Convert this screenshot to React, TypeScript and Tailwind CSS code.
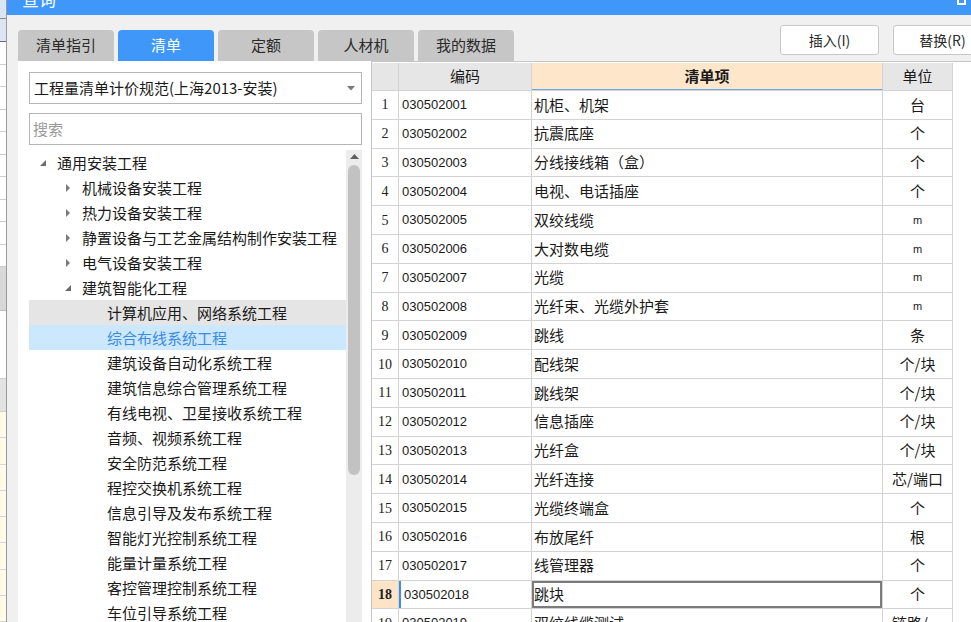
import React from "react";

const CJK = '"Noto Sans CJK SC", "Noto Sans", sans-serif';

type TreeRow = { level: number; arrow: "open" | "closed" | "none"; text: string; state?: "hover" | "selected" };

const tree: TreeRow[] = [
  { level: 0, arrow: "open", text: "通用安装工程" },
  { level: 1, arrow: "closed", text: "机械设备安装工程" },
  { level: 1, arrow: "closed", text: "热力设备安装工程" },
  { level: 1, arrow: "closed", text: "静置设备与工艺金属结构制作安装工程" },
  { level: 1, arrow: "closed", text: "电气设备安装工程" },
  { level: 1, arrow: "open", text: "建筑智能化工程" },
  { level: 2, arrow: "none", text: "计算机应用、网络系统工程", state: "hover" },
  { level: 2, arrow: "none", text: "综合布线系统工程", state: "selected" },
  { level: 2, arrow: "none", text: "建筑设备自动化系统工程" },
  { level: 2, arrow: "none", text: "建筑信息综合管理系统工程" },
  { level: 2, arrow: "none", text: "有线电视、卫星接收系统工程" },
  { level: 2, arrow: "none", text: "音频、视频系统工程" },
  { level: 2, arrow: "none", text: "安全防范系统工程" },
  { level: 2, arrow: "none", text: "程控交换机系统工程" },
  { level: 2, arrow: "none", text: "信息引导及发布系统工程" },
  { level: 2, arrow: "none", text: "智能灯光控制系统工程" },
  { level: 2, arrow: "none", text: "能量计量系统工程" },
  { level: 2, arrow: "none", text: "客控管理控制系统工程" },
  { level: 2, arrow: "none", text: "车位引导系统工程" },
];

const rows: { code: string; name: string; unit: string }[] = [
  { code: "030502001", name: "机柜、机架", unit: "台" },
  { code: "030502002", name: "抗震底座", unit: "个" },
  { code: "030502003", name: "分线接线箱（盒）", unit: "个" },
  { code: "030502004", name: "电视、电话插座", unit: "个" },
  { code: "030502005", name: "双绞线缆", unit: "m" },
  { code: "030502006", name: "大对数电缆", unit: "m" },
  { code: "030502007", name: "光缆", unit: "m" },
  { code: "030502008", name: "光纤束、光缆外护套", unit: "m" },
  { code: "030502009", name: "跳线", unit: "条" },
  { code: "030502010", name: "配线架", unit: "个/块" },
  { code: "030502011", name: "跳线架", unit: "个/块" },
  { code: "030502012", name: "信息插座", unit: "个/块" },
  { code: "030502013", name: "光纤盒", unit: "个/块" },
  { code: "030502014", name: "光纤连接", unit: "芯/端口" },
  { code: "030502015", name: "光缆终端盒", unit: "个" },
  { code: "030502016", name: "布放尾纤", unit: "根" },
  { code: "030502017", name: "线管理器", unit: "个" },
  { code: "030502018", name: "跳块", unit: "个" },
  { code: "030502019", name: "双绞线缆测试", unit: "链路/…" },
];

function Arrow({ kind }: { kind: "open" | "closed" | "none" }) {
  if (kind === "open")
    return (
      <svg width="8" height="8" viewBox="0 0 8 8">
        <polygon points="7,1 7,7 1,7" fill="#6b6b6b" />
      </svg>
    );
  if (kind === "closed")
    return (
      <svg width="6" height="10" viewBox="0 0 6 10">
        <polygon points="1,1 5,5 1,9" fill="#7a7a7a" />
      </svg>
    );
  return null;
}

function LeftStrip() {
  return (
    <div className="w-[6px] shrink-0 flex flex-col bg-white">
      <div className="h-[20px] bg-[#dbe5f3] border-b border-[#8a8a8a]" />
      <div className="h-[25px] bg-[#dbe5f3] border-b border-[#6a6a6a]" />
      {Array.from({ length: 10 }).map((_, i) => (
        <div key={i} className="h-[24px] border-b border-[#cfcfcf]" />
      ))}
      <div className="h-[47px] bg-[#d8d8d8] border-b border-[#bdbdbd]" />
      <div className="h-[72px] border-b border-[#cfcfcf]" />
      <div className="h-[36px] bg-[#e2e2e2] border-b border-[#cfcfcf]" />
      {Array.from({ length: 8 }).map((_, i) => (
        <div key={i} className="h-[28px] bg-[#fffbe8] border-b border-[#d6d6d6]" />
      ))}
    </div>
  );
}

function TreePanel() {
  return (
    <div className="w-[353px] shrink-0 bg-white pl-[11px] pr-[8px] pt-[11px] flex flex-col" style={{ fontFamily: CJK }}>
      <div className="h-[32px] w-[333px] border border-[#b5b5b5] bg-white flex items-center pl-[4px] pr-[6px]">
        <span className="flex-1 text-[15px] leading-[20px] text-[#1a1a1a] whitespace-nowrap">工程量清单计价规范(上海2013-安装)</span>
        <svg width="8" height="5" viewBox="0 0 8 5">
          <polygon points="0,0 8,0 4,4.5" fill="#7a7a7a" />
        </svg>
      </div>
      <div className="mt-[9px] h-[32px] w-[333px] border border-[#b5b5b5] bg-white flex items-center pl-[3px]">
        <span className="text-[15px] leading-[20px] text-[#9a9a9a]">搜索</span>
      </div>
      <div className="mt-[5px] flex flex-1 min-h-0 w-[333px]">
        <div className="flex-1 flex flex-col overflow-hidden">
          {tree.map((r, i) => (
            <div
              key={i}
              className={
                "h-[25px] shrink-0 flex items-center whitespace-nowrap " +
                (r.state === "hover" ? "bg-[#e5e5e5] " : r.state === "selected" ? "bg-[#cce8ff] " : "")
              }
              style={{ paddingLeft: 4 + r.level * 25 }}
            >
              <div className="w-[20px] h-[25px] flex items-center justify-center">
                <Arrow kind={r.arrow} />
              </div>
              <span
                className={
                  "ml-[4px] text-[15px] leading-[25px] " + (r.state === "selected" ? "text-[#3b8be0]" : "text-[#1a1a1a]")
                }
              >
                {r.text}
              </span>
            </div>
          ))}
        </div>
        <div className="w-[16px] bg-[#ececec] flex flex-col items-center pt-[4px]">
          <svg width="9" height="5" viewBox="0 0 9 5">
            <polygon points="0,5 9,5 4.5,0" fill="#606060" />
          </svg>
          <div className="mt-[6px] w-[12px] h-[310px] rounded-full bg-[#c2c2c2]" />
        </div>
      </div>
    </div>
  );
}

function Table() {
  const border = "border-[#d3d3d3]";
  return (
    <div className={"flex-1 bg-white border-t border-l border-[#c6c6c6] pt-[1px]"}>
      <div className="w-[581px]">
        <div className={"h-[28px] flex border-b " + border} style={{ fontFamily: CJK }}>
          <div className={"w-[27px] bg-[#e6e6e6] border-r " + border} />
          <div className={"w-[133px] bg-[#e6e6e6] border-r flex items-center justify-center text-[15px] text-[#1a1a1a] " + border}>
            编码
          </div>
          <div className={"w-[351px] bg-[#fde6ca] border-r flex items-center justify-center text-[15px] font-bold text-[#1a1a1a] border-b border-b-[#6aa8ec] " + border}>
            清单项
          </div>
          <div className={"w-[70px] bg-[#e6e6e6] border-r flex items-center justify-center text-[15px] text-[#1a1a1a] " + border}>
            单位
          </div>
        </div>
        {rows.map((r, i) => {
          const active = i === 17;
          const latin = r.unit === "m";
          return (
            <div key={i} className={"h-[28.8px] flex border-b " + border}>
              <div
                className={
                  "w-[27px] border-r flex items-center justify-center text-[14px] text-[#222] " +
                  border +
                  (active ? " bg-[#fde4c6] font-bold" : "")
                }
                style={{ fontFamily: '"Liberation Serif", serif' }}
              >
                {i + 1}
              </div>
              <div
                className={
                  "w-[133px] border-r flex items-center pl-[3px] text-[13px] text-[#1a1a1a] " +
                  border +
                  (active ? " border-l-2 border-l-[#3e8fe6] pl-[1px]" : "")
                }
                style={{ fontFamily: '"Liberation Sans", Arial, sans-serif' }}
              >
                {r.code}
              </div>
              <div
                className={
                  "w-[351px] border-r flex items-center pl-[2px] text-[15px] text-[#1a1a1a] " +
                  border +
                  (active ? " shadow-[inset_0_0_0_2px_#7b7b7b]" : "")
                }
                style={{ fontFamily: CJK }}
              >
                {r.name}
              </div>
              <div
                className={
                  "w-[70px] border-r flex items-center justify-center text-[#1a1a1a] whitespace-nowrap " +
                  border +
                  (latin ? " text-[11px]" : " text-[15px]")
                }
                style={{ fontFamily: latin ? '"Liberation Sans", sans-serif' : CJK }}
              >
                {r.unit}
              </div>
            </div>
          );
        })}
      </div>
    </div>
  );
}

export default function App() {
  const tabs = ["清单指引", "清单", "定额", "人材机", "我的数据"];
  return (
    <div className="w-[971px] h-[622px] overflow-hidden flex bg-white" style={{ fontFamily: CJK }}>
      <LeftStrip />
      <div className="flex-1 min-w-0 flex flex-col border-l border-[#9a9a9a]">
        <div className="h-[15px] shrink-0 bg-[#4097fa] flex items-start overflow-hidden">
          <span className="ml-[15px] -mt-[11px] text-[17px] leading-[20px] text-white">查询</span>
          <div className="ml-auto mr-[5px] w-[9px] h-[5px] border-2 border-t-0 border-white" />
        </div>
        <div className="flex-1 min-h-0 bg-[#f0f0f0] flex flex-col pl-[11px]">
          <div className="h-[46px] shrink-0 flex items-end pt-[10px]">
            <div className="flex gap-[4px]">
              {tabs.map((t, i) => (
                <div
                  key={t}
                  className={
                    "w-[96px] h-[31px] rounded-t-[4px] flex items-center justify-center text-[15px] " +
                    (i === 1 ? "bg-[#4097fa] text-white" : "bg-[#c6c6c6] text-[#2a2a2a]")
                  }
                >
                  {t}
                </div>
              ))}
            </div>
            <div className="self-start ml-[266px] flex gap-[14px] shrink-0">
              <div className="w-[99px] h-[30px] bg-white border border-[#c8c8c8] rounded-[3px] flex items-center justify-center text-[14px] text-[#2a2a2a]">
                插入(I)
              </div>
              <div className="w-[99px] h-[30px] bg-white border border-[#c8c8c8] rounded-[3px] flex items-center justify-center text-[14px] text-[#2a2a2a]">
                替换(R)
              </div>
            </div>
          </div>
          <div className="flex-1 min-h-0 flex bg-white">
            <TreePanel />
            <Table />
          </div>
        </div>
      </div>
    </div>
  );
}
